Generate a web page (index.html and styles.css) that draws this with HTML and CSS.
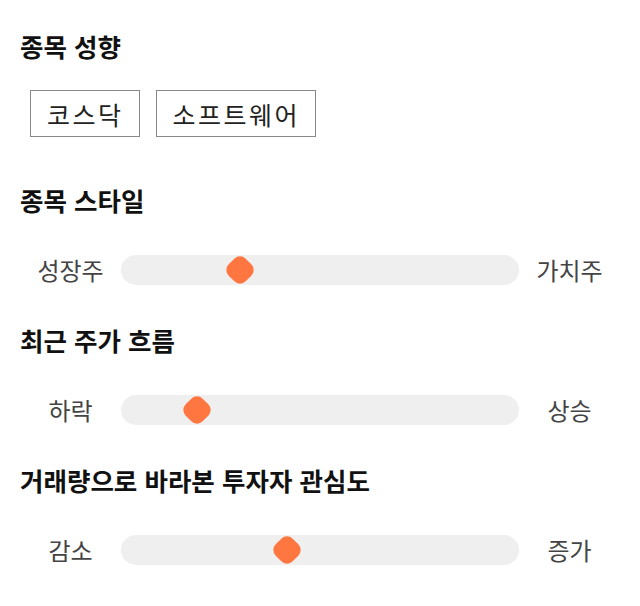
FILE: index.html
```html
<!DOCTYPE html>
<html lang="ko">
<head>
<meta charset="utf-8">
<link rel="stylesheet" href="styles.css">
</head>
<body>
<div class="page">
  <section class="section">
    <h2 class="title">종목 성향</h2>
    <div class="chips">
      <span class="chip">코스닥</span>
      <span class="chip">소프트웨어</span>
    </div>
  </section>
  <section class="section">
    <h2 class="title">종목 스타일</h2>
    <div class="slider">
      <span class="label">성장주</span>
      <div class="track"><span class="thumb" style="left: 30%"></span></div>
      <span class="label">가치주</span>
    </div>
  </section>
  <section class="section">
    <h2 class="title">최근 주가 흐름</h2>
    <div class="slider">
      <span class="label">하락</span>
      <div class="track"><span class="thumb" style="left: 19%"></span></div>
      <span class="label">상승</span>
    </div>
  </section>
  <section class="section">
    <h2 class="title">거래량으로 바라본 투자자 관심도</h2>
    <div class="slider">
      <span class="label">감소</span>
      <div class="track"><span class="thumb" style="left: 41.6%"></span></div>
      <span class="label">증가</span>
    </div>
  </section>
</div>
</body>
</html>
```

FILE: styles.css
```css
html, body {
  margin: 0;
  padding: 0;
  background: #ffffff;
}
body {
  font-family: "Noto Sans CJK KR", "Noto Sans", sans-serif;
  color: #111111;
}
.page {
  padding: 29px 20px 0 20px;
  display: flex;
  flex-direction: column;
}
.section {
  display: flex;
  flex-direction: column;
}
.title {
  margin: 0;
  font-size: 25.5px;
  font-weight: 700;
  line-height: 34px;
  color: #111111;
}
.chips {
  display: flex;
  gap: 16px;
  padding: 27px 0 0 10px;
  margin-bottom: 46px;
}
.chip {
  box-sizing: border-box;
  border: 1px solid #888888;
  height: 47px;
  padding: 0 15px 0 16px;
  display: flex;
  align-items: center;
  font-size: 25px;
  letter-spacing: 2.5px;
  color: #222222;
}
.slider {
  display: flex;
  align-items: center;
  margin-top: 38px;
  margin-bottom: 38px;
}
.label {
  width: 101px;
  text-align: center;
  font-size: 24px;
  line-height: 30px;
  color: #444444;
}
.track {
  flex: 1;
  height: 30px;
  border-radius: 15px;
  background: #efefef;
  position: relative;
}
.thumb {
  position: absolute;
  top: 50%;
  width: 24px;
  height: 24px;
  background: #ff7640;
  border-radius: 8px;
  transform: translate(-50%, -50%) rotate(45deg);
}
```
